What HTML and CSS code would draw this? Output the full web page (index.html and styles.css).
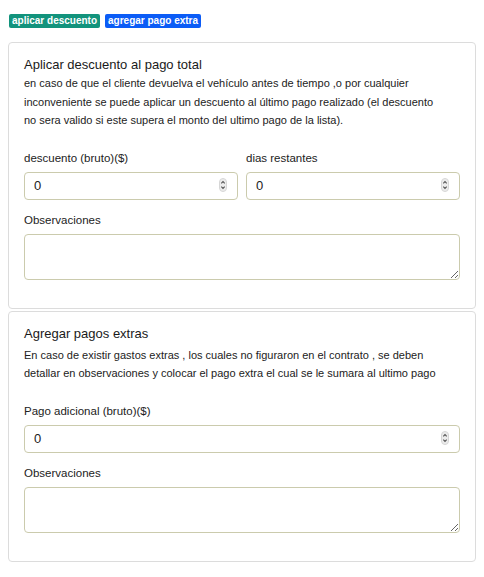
FILE: index.html
```html
<!DOCTYPE html>
<html lang="es">
<head>
<meta charset="utf-8">
<link rel="stylesheet" href="styles.css">
</head>
<body>
<div class="badges">
  <span class="badge badge-green">aplicar descuento</span>
  <span class="badge badge-blue">agregar pago extra</span>
</div>

<div class="card">
  <h5 class="card-title">Aplicar descuento al pago total</h5>
  <p class="card-text">en caso de que el cliente devuelva el vehículo antes de tiempo ,o por cualquier<br>inconveniente se puede aplicar un descuento al último pago realizado (el descuento<br>no sera valido si este supera el monto del ultimo pago de la lista).</p>
  <div class="row">
    <div class="field">
      <label class="label">descuento (bruto)($)</label>
      <div class="num">
        <input class="input" type="text" value="0">
        <span class="spin"><svg width="8" height="14" viewBox="0 0 8 14"><rect x="0.5" y="0.5" width="7" height="13" rx="3.5" fill="#ececec" stroke="#d6d6d6"/><path d="M2.3 5.3 L4 3.6 L5.7 5.3" fill="none" stroke="#555" stroke-width="1.1"/><path d="M2.3 8.7 L4 10.4 L5.7 8.7" fill="none" stroke="#555" stroke-width="1.1"/></svg></span>
      </div>
    </div>
    <div class="field">
      <label class="label">dias restantes</label>
      <div class="num">
        <input class="input" type="text" value="0">
        <span class="spin"><svg width="8" height="14" viewBox="0 0 8 14"><rect x="0.5" y="0.5" width="7" height="13" rx="3.5" fill="#ececec" stroke="#d6d6d6"/><path d="M2.3 5.3 L4 3.6 L5.7 5.3" fill="none" stroke="#555" stroke-width="1.1"/><path d="M2.3 8.7 L4 10.4 L5.7 8.7" fill="none" stroke="#555" stroke-width="1.1"/></svg></span>
      </div>
    </div>
  </div>
  <div class="field">
    <label class="label">Observaciones</label>
    <textarea class="textarea"></textarea>
  </div>
</div>

<div class="card card-second">
  <h5 class="card-title">Agregar pagos extras</h5>
  <p class="card-text">En caso de existir gastos extras , los cuales no figuraron en el contrato , se deben<br>detallar en observaciones y colocar el pago extra el cual se le sumara al ultimo pago</p>
  <div class="field">
    <label class="label">Pago adicional (bruto)($)</label>
    <div class="num">
      <input class="input" type="text" value="0">
      <span class="spin"><svg width="8" height="14" viewBox="0 0 8 14"><rect x="0.5" y="0.5" width="7" height="13" rx="3.5" fill="#ececec" stroke="#d6d6d6"/><path d="M2.3 5.3 L4 3.6 L5.7 5.3" fill="none" stroke="#555" stroke-width="1.1"/><path d="M2.3 8.7 L4 10.4 L5.7 8.7" fill="none" stroke="#555" stroke-width="1.1"/></svg></span>
    </div>
  </div>
  <div class="field">
    <label class="label">Observaciones</label>
    <textarea class="textarea"></textarea>
  </div>
</div>
</body>
</html>
```

FILE: styles.css
```css
* { box-sizing: border-box; }
body {
  margin: 8px;
  font-family: "Liberation Sans", Arial, sans-serif;
  color: #212529;
  background: #fff;
}
.badges {
  display: flex;
  gap: 5px;
  padding: 6px 0 0 1px;
  margin-bottom: 14px;
}
.badge {
  display: inline-block;
  font-size: 10px;
  font-weight: bold;
  color: #fff;
  line-height: 14px;
  padding: 0 3px;
  border-radius: 2px;
}
.badge-green { background: #12937c; }
.badge-blue { background: #0b5cf6; }
.card {
  border: 1px solid #dcdcdc;
  border-radius: 4px;
  padding: 13px 15px 16px;
  margin-bottom: 2px;
}
.card-title {
  margin: 0;
  font-size: 13px;
  font-weight: normal;
  line-height: 18px;
  color: #1a1a1a;
}
.card-second .card-title { margin-bottom: 3px; }
.card-text {
  margin: 0 0 20px;
  font-size: 11px;
  line-height: 18.5px;
  color: #222;
  white-space: nowrap;
}
.row {
  display: grid;
  grid-template-columns: 1fr 1fr;
  gap: 8px;
}
.field { margin-bottom: 12px; }
.label {
  display: block;
  font-size: 11.5px;
  line-height: 16px;
  color: #222;
  margin-bottom: 6px;
}
.num { position: relative; }
.input {
  display: block;
  width: 100%;
  height: 28px;
  border: 1px solid #cbcbad;
  border-radius: 4px;
  padding: 0 9px;
  font-family: "Liberation Sans", Arial, sans-serif;
  font-size: 13px;
  color: #222;
  background: #fff;
  outline: none;
}
.spin {
  position: absolute;
  right: 11px;
  top: 6px;
  line-height: 0;
}
.textarea {
  display: block;
  width: 100%;
  height: 46px;
  border: 1px solid #cbcbad;
  border-radius: 4px;
  resize: vertical;
  font-family: "Liberation Sans", Arial, sans-serif;
  font-size: 13px;
  outline: none;
}
```
